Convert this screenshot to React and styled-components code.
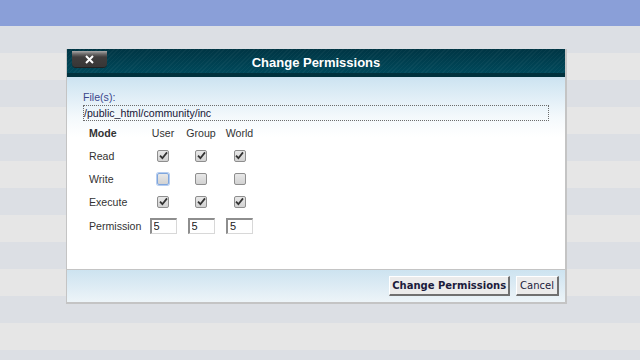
import React from "react";
import styled, { createGlobalStyle } from "styled-components";

const GlobalStyle = createGlobalStyle`
    html, body {
        margin: 0;
        padding: 0;
    }
    body {
        width: 640px;
        height: 360px;
        overflow: hidden;
        font-family: "Liberation Sans", Arial, sans-serif;
        background: repeating-linear-gradient(
            to bottom,
            #dcdfe4 0px,
            #dcdfe4 27px,
            #e6e6e6 27px,
            #e6e6e6 54px
        );
        background-position: 0 26px;
    }
`;

const modes = [
    { name: "Read", values: [true, true, true] },
    { name: "Write", values: [false, false, false], focus: 0 },
    { name: "Execute", values: [true, true, true] },
];

const Page = styled.div`
    display: flex;
    flex-direction: column;
`;

const TopBar = styled.div`
    height: 26px;
    background-color: #8a9fd8;
`;

const Stage = styled.div`
    padding: 23px 0 0 66px;
`;

const Dialog = styled.div`
    width: 498px;
    display: flex;
    flex-direction: column;
    border-left: 1px solid #c4c4c4;
    border-right: 2px solid #c4c4c4;
    border-bottom: 2px solid #c4c4c4;
    background: #fff;
`;

const Header = styled.div`
    position: relative;
    height: 24px;
    border-bottom: 4px solid #00313d;
    display: flex;
    align-items: center;
    justify-content: center;
    background:
        repeating-linear-gradient(
            135deg,
            rgba(255, 255, 255, 0.035) 0px,
            rgba(255, 255, 255, 0.035) 1px,
            transparent 1px,
            transparent 3px
        ),
        linear-gradient(to bottom, #003544, #00495b);
`;

const Title = styled.h1`
    margin: 0;
    padding-top: 3px;
    font-family: "Liberation Sans", Arial, sans-serif;
    font-size: 13px;
    font-weight: bold;
    color: #ffffff;
`;

const CloseButton = styled.button`
    position: absolute;
    left: 5px;
    top: 2px;
    width: 35px;
    height: 16px;
    padding: 0;
    border: none;
    border-radius: 0 0 4px 4px;
    background: linear-gradient(to bottom, #a9a9a9 0px, #6b6969 3px, #3f3d3d 6px, #383636 100%);
    box-shadow: 0 1px 0 #222;
    display: flex;
    align-items: center;
    justify-content: center;
`;

const Body = styled.div`
    height: 192px;
    box-sizing: border-box;
    padding: 13px 16px 0 16px;
    background: linear-gradient(to bottom, #cce3f1 0px, #f4f9fc 40px, #ffffff 60px);
`;

const FieldLabel = styled.div`
    font-size: 10.6px;
    line-height: 14px;
    color: #3b468c;
`;

const PathBox = styled.div`
    margin-top: 1px;
    height: 14px;
    width: 464px;
    border: 1px dotted #6c6c6c;
    font-size: 10.6px;
    line-height: 14px;
    color: #161636;
`;

const ModeGrid = styled.div`
    display: grid;
    grid-template-columns: 55px 38px 38px 39px;
    grid-auto-rows: 23px;
    margin-left: 6px;
    align-items: center;
    font-size: 10.6px;
    color: #333;
`;

const HeadCell = styled.div`
    font-weight: ${(p) => (p.$bold ? "bold" : "normal")};
    justify-self: ${(p) => (p.$bold ? "start" : "center")};
    color: #333;
`;

const RowLabel = styled.div`
    justify-self: start;
    color: #333;
    padding-top: ${(p) => (p.$tall ? "3px" : "0")};
`;

const Cell = styled.div`
    justify-self: center;
    display: flex;
    padding-top: ${(p) => (p.$tall ? "3px" : "0")};
`;

const Check = styled.span`
    width: 10px;
    height: 10px;
    border: 1px solid ${(p) => (p.$focus ? "#7fa6dd" : "#8e8e8e")};
    box-shadow: ${(p) => (p.$focus ? "0 0 0 1px #b6cdf0" : "none")};
    border-radius: 2px;
    background: linear-gradient(to bottom, #e8e8e8, #d2d2d2);
    display: flex;
    align-items: center;
    justify-content: center;
`;

const PermInput = styled.input`
    width: 22px;
    height: 13px;
    padding: 0 0 0 2px;
    border-style: solid;
    border-width: 2px 1px 1px 2px;
    border-color: #8e8e8e #d8d8d8 #d8d8d8 #8e8e8e;
    font-family: "Liberation Sans", Arial, sans-serif;
    font-size: 11px;
    line-height: 13px;
    color: #222;
    outline: none;
`;

const Footer = styled.div`
    height: 32px;
    border-top: 1px solid #c4c4c4;
    display: flex;
    align-items: center;
    justify-content: flex-end;
    gap: 6px;
    padding-right: 6px;
    background: linear-gradient(to bottom, #cde3f0, #edf4f8);
`;

const ActionButton = styled.button`
    height: 20px;
    padding: 0 ${(p) => (p.$primary ? "2px" : "3px")};
    border-style: solid;
    border-width: 1px 2px 2px 1px;
    border-color: #ffffff #707070 #707070 #ffffff;
    background: #ebebeb;
    font-family: "DejaVu Sans", Verdana, sans-serif;
    font-size: 10px;
    font-weight: ${(p) => (p.$primary ? "bold" : "normal")};
    color: #1c1c3c;
`;

function CheckMark() {
    return (
        <svg width="9" height="9" viewBox="0 0 9 9">
            <path d="M1 4.6 L3.4 7.2 L8 1.4" fill="none" stroke="#333" strokeWidth="1.8" />
        </svg>
    );
}

export default function App() {
    return (
        <>
            <GlobalStyle />
            <Page>
                <TopBar />
                <Stage>
                    <Dialog>
                        <Header>
                            <CloseButton aria-label="close">
                                <svg width="9" height="9" viewBox="0 0 9 9">
                                    <path d="M1 1 L8 8 M8 1 L1 8" stroke="#fff" strokeWidth="2" />
                                </svg>
                            </CloseButton>
                            <Title>Change Permissions</Title>
                        </Header>

                        <Body>
                            <FieldLabel>File(s):</FieldLabel>
                            <PathBox>/public_html/community/inc</PathBox>

                            <ModeGrid>
                                <HeadCell $bold>Mode</HeadCell>
                                <HeadCell>User</HeadCell>
                                <HeadCell>Group</HeadCell>
                                <HeadCell>World</HeadCell>

                                {modes.map((mode) => (
                                    <React.Fragment key={mode.name}>
                                        <RowLabel>{mode.name}</RowLabel>
                                        {mode.values.map((on, i) => (
                                            <Cell key={i}>
                                                <Check $focus={mode.focus === i}>
                                                    {on && <CheckMark />}
                                                </Check>
                                            </Cell>
                                        ))}
                                    </React.Fragment>
                                ))}

                                <RowLabel $tall>Permission</RowLabel>
                                {[5, 5, 5].map((v, i) => (
                                    <Cell $tall key={i}>
                                        <PermInput defaultValue={v} />
                                    </Cell>
                                ))}
                            </ModeGrid>
                        </Body>

                        <Footer>
                            <ActionButton $primary>Change Permissions</ActionButton>
                            <ActionButton>Cancel</ActionButton>
                        </Footer>
                    </Dialog>
                </Stage>
            </Page>
        </>
    );
}
